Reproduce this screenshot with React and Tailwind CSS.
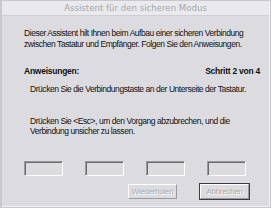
export default function App() {
  const font = { fontFamily: '"Liberation Sans", Arial, sans-serif' };
  return (
    <div className="w-[271px] h-[208px] bg-[#c8c8cc] pt-px pl-[2px] pr-px pb-px" style={font}>
      <div className="w-[268px] h-[206px] flex flex-col bg-[#dcdce0] border-r border-b border-[#f2f2f4] box-border">
        <div className="h-[15px] shrink-0 bg-[#eaeaee] border-b border-[#cfcfd3] flex items-center justify-center">
          <span className="text-[8.6px] leading-none tracking-[0px] text-[#a6a6aa]" style={{ fontFamily: '"DejaVu Sans", sans-serif' }}>
            Assistent für den sicheren Modus
          </span>
        </div>
        <div className="flex flex-col pl-[22px] pr-[9px] text-[8.5px] tracking-[-0.45px] text-[#111]">
          <p className="mt-[12px] leading-[11px]">
            Dieser Assistent hilt Ihnen beim Aufbau einer sicheren Verbindung
            <br />
            zwischen Tastatur und Empfänger. Folgen Sie den Anweisungen.
          </p>
          <div className="mt-[16px] flex justify-between leading-[11px] font-bold tracking-[-0.25px]">
            <span>Anweisungen:</span>
            <span>Schritt 2 von 4</span>
          </div>
          <p className="mt-[7px] pl-[6px] leading-[11px]">
            Drücken Sie die Verbindungstaste an der Unterseite der Tastatur.
          </p>
          <p className="mt-[21px] pl-[6px] leading-[10px]">
            Drücken Sie &lt;Esc&gt;, um den Vorgang abzubrechen, und die
            <br />
            Verbindung unsicher zu lassen.
          </p>
          <div className="mt-[25px] flex gap-[22px]">
            {[0, 1, 2, 3].map((i) => (
              <div
                key={i}
                className="w-[39px] h-[15px] border border-t-[#9a9a9e] border-l-[#9a9a9e] border-b-white border-r-white shadow-[inset_1px_1px_0_#6a6a6e]"
              />
            ))}
          </div>
          <div className="mt-[7px] flex items-start">
            <div className="ml-[104px] mt-px w-[49px] h-[15px] flex items-center justify-center border border-t-white border-l-white border-b-[#9a9a9e] border-r-[#9a9a9e] text-[8px] tracking-[-0.3px] text-[#a8a8ac] [text-shadow:1px_1px_0_#ffffff]">
              Wiederholen
            </div>
            <div className="ml-[22px] w-[51px] h-[17px] border border-[#3c3c40]">
              <div className="w-full h-full flex items-center justify-center border border-t-white border-l-white border-b-[#9a9a9e] border-r-[#9a9a9e] text-[8px] tracking-[-0.3px] text-[#a8a8ac] [text-shadow:1px_1px_0_#ffffff]">
                Abbrechen
              </div>
            </div>
          </div>
        </div>
      </div>
    </div>
  );
}
